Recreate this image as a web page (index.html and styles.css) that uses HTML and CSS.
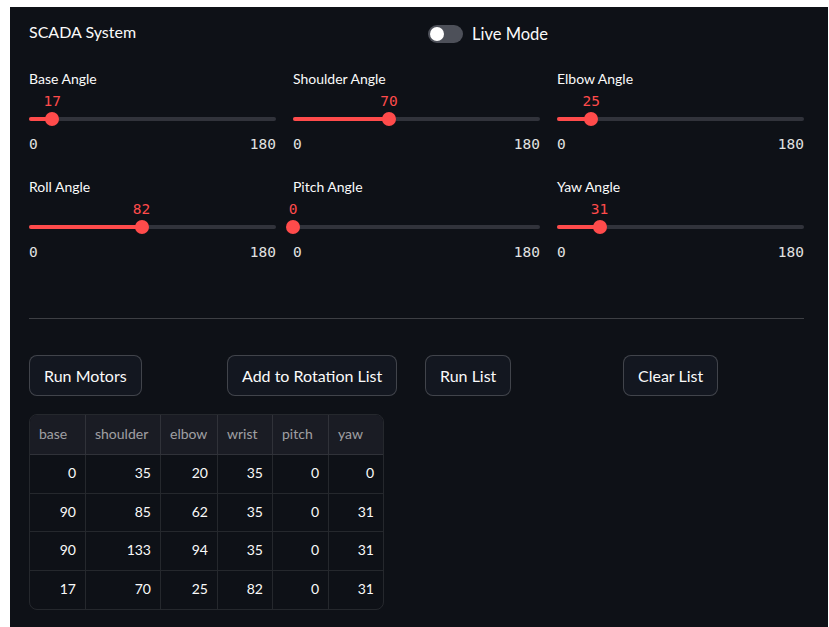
FILE: index.html
```html
<!DOCTYPE html>
<html lang="en">
<head>
<meta charset="utf-8">
<title>SCADA System</title>
<link rel="stylesheet" href="styles.css">
</head>
<body>
<div class="app">
  <header class="top">
    <div class="title">SCADA System</div>
    <div class="toggle">
      <span class="switch"><span class="knob"></span></span>
      <span class="toggle-label">Live Mode</span>
    </div>
  </header>

  <section class="sliders">
    <div class="slider">
      <div class="label">Base Angle</div>
      <div class="value-row"><span class="value" style="left:9.444%">17</span></div>
      <div class="track"><div class="fill" style="width:9.444%"></div><div class="thumb" style="left:9.444%"></div></div>
      <div class="ticks"><span>0</span><span>180</span></div>
    </div>
    <div class="slider">
      <div class="label">Shoulder Angle</div>
      <div class="value-row"><span class="value" style="left:38.889%">70</span></div>
      <div class="track"><div class="fill" style="width:38.889%"></div><div class="thumb" style="left:38.889%"></div></div>
      <div class="ticks"><span>0</span><span>180</span></div>
    </div>
    <div class="slider">
      <div class="label">Elbow Angle</div>
      <div class="value-row"><span class="value" style="left:13.889%">25</span></div>
      <div class="track"><div class="fill" style="width:13.889%"></div><div class="thumb" style="left:13.889%"></div></div>
      <div class="ticks"><span>0</span><span>180</span></div>
    </div>
    <div class="slider">
      <div class="label">Roll Angle</div>
      <div class="value-row"><span class="value" style="left:45.556%">82</span></div>
      <div class="track"><div class="fill" style="width:45.556%"></div><div class="thumb" style="left:45.556%"></div></div>
      <div class="ticks"><span>0</span><span>180</span></div>
    </div>
    <div class="slider">
      <div class="label">Pitch Angle</div>
      <div class="value-row"><span class="value" style="left:0%">0</span></div>
      <div class="track"><div class="fill" style="width:0%"></div><div class="thumb" style="left:0%"></div></div>
      <div class="ticks"><span>0</span><span>180</span></div>
    </div>
    <div class="slider">
      <div class="label">Yaw Angle</div>
      <div class="value-row"><span class="value" style="left:17.222%">31</span></div>
      <div class="track"><div class="fill" style="width:17.222%"></div><div class="thumb" style="left:17.222%"></div></div>
      <div class="ticks"><span>0</span><span>180</span></div>
    </div>
  </section>

  <hr class="divider">

  <div class="actions">
    <div class="cell"><button class="btn">Run Motors</button></div>
    <div class="cell"><button class="btn">Add to Rotation List</button></div>
    <div class="cell"><button class="btn">Run List</button></div>
    <div class="cell"><button class="btn">Clear List</button></div>
  </div>

  <div class="table-wrap">
    <table class="grid">
      <colgroup>
        <col class="c-base"><col class="c-shoulder"><col class="c-elbow">
        <col class="c-wrist"><col class="c-pitch"><col class="c-yaw">
      </colgroup>
      <thead>
        <tr><th>base</th><th>shoulder</th><th>elbow</th><th>wrist</th><th>pitch</th><th>yaw</th></tr>
      </thead>
      <tbody>
        <tr><td>0</td><td>35</td><td>20</td><td>35</td><td>0</td><td>0</td></tr>
        <tr><td>90</td><td>85</td><td>62</td><td>35</td><td>0</td><td>31</td></tr>
        <tr><td>90</td><td>133</td><td>94</td><td>35</td><td>0</td><td>31</td></tr>
        <tr><td>17</td><td>70</td><td>25</td><td>82</td><td>0</td><td>31</td></tr>
      </tbody>
    </table>
  </div>
</div>
</body>
</html>
```

FILE: styles.css
```css
body {
  margin: 0;
  background: #ffffff;
}

.app {
  margin: 7px 0 0 10px;
  width: 818px;
  height: 620px;
  box-sizing: border-box;
  padding: 14px 24px 0 19px;
  background: #0e1117;
  color: #fafafa;
  font-family: Lato, "Source Sans Pro", sans-serif;
  overflow: hidden;
}

/* header: title on the left, live mode switch in the second half */
.top {
  display: grid;
  grid-template-columns: 379px 379px;
  column-gap: 17px;
  height: 26px;
  align-items: start;
}

.title {
  font-size: 16px;
  line-height: 20px;
  margin-top: 1px;
}

.toggle {
  display: flex;
  align-items: center;
  gap: 9px;
  margin: 4px 0 0 3px;
  height: 18px;
}

.switch {
  position: relative;
  width: 35px;
  height: 18px;
  border-radius: 9px;
  background: #4d5059;
}

.knob {
  position: absolute;
  top: 2px;
  left: 2px;
  width: 14px;
  height: 14px;
  border-radius: 50%;
  background: #ffffff;
}

.toggle-label {
  font-size: 16.5px;
  line-height: 20px;
}

/* angle sliders */
.sliders {
  display: grid;
  grid-template-columns: repeat(3, 247px);
  column-gap: 17px;
  row-gap: 23px;
  margin-top: 23px;
}

.label {
  height: 20px;
  font-size: 14px;
  line-height: 18px;
}

.value-row {
  position: relative;
  height: 20px;
  margin-top: 2px;
}

.value {
  position: absolute;
  top: 0;
  transform: translateX(-50%);
  font-family: "DejaVu Sans Mono", monospace;
  font-size: 14.5px;
  line-height: 18px;
  color: #ff4b4b;
}

.track {
  position: relative;
  height: 14px;
}

.track::before {
  content: "";
  position: absolute;
  left: 0;
  right: 0;
  top: 5px;
  height: 4px;
  border-radius: 2px;
  background: #31333b;
}

.fill {
  position: absolute;
  left: 0;
  top: 5px;
  height: 4px;
  border-radius: 2px;
  background: #ff4b4b;
}

.thumb {
  position: absolute;
  top: 0;
  width: 14px;
  height: 14px;
  border-radius: 50%;
  background: #ff4b4b;
  transform: translateX(-50%);
}

.ticks {
  display: flex;
  justify-content: space-between;
  margin-top: 9px;
  height: 20px;
  font-family: "DejaVu Sans Mono", monospace;
  font-size: 14.5px;
  line-height: 18px;
  color: #e2e2e2;
}

.divider {
  border: 0;
  height: 1px;
  margin: 55px 0 0;
  background: rgba(250, 250, 250, 0.2);
}

/* action buttons */
.actions {
  display: grid;
  grid-template-columns: repeat(4, 181px);
  column-gap: 17px;
  margin-top: 36px;
}

.btn {
  height: 41px;
  padding: 0 14px 1px;
  border: 1px solid rgba(250, 250, 250, 0.2);
  border-radius: 8px;
  background: #131720;
  color: #fafafa;
  font-family: Lato, "Source Sans Pro", sans-serif;
  font-size: 16px;
  cursor: pointer;
}

/* rotation list table */
.table-wrap {
  margin-top: 18px;
  width: 355px;
  box-sizing: border-box;
  border: 1px solid rgba(250, 250, 250, 0.1);
  border-radius: 8px;
  overflow: hidden;
}

.grid {
  width: 353px;
  table-layout: fixed;
  border-collapse: separate;
  border-spacing: 0;
  font-size: 14px;
}

.c-base { width: 56px; }
.c-shoulder { width: 75px; }
.c-elbow { width: 57px; }
.c-wrist { width: 55px; }
.c-pitch { width: 56px; }
.c-yaw { width: 54px; }

.grid th,
.grid td {
  box-sizing: border-box;
  padding: 0 9px 2px;
  border-right: 1px solid rgba(250, 250, 250, 0.1);
  border-bottom: 1px solid rgba(250, 250, 250, 0.1);
  white-space: nowrap;
  overflow: hidden;
}

.grid th:last-child,
.grid td:last-child {
  border-right: 0;
}

.grid tbody tr:last-child td {
  border-bottom: 0;
}

.grid th {
  height: 40px;
  background: #1a1c24;
  color: rgba(250, 250, 250, 0.6);
  font-weight: normal;
  text-align: left;
}

.grid td {
  height: 38.5px;
  text-align: right;
  color: #fafafa;
}
```
